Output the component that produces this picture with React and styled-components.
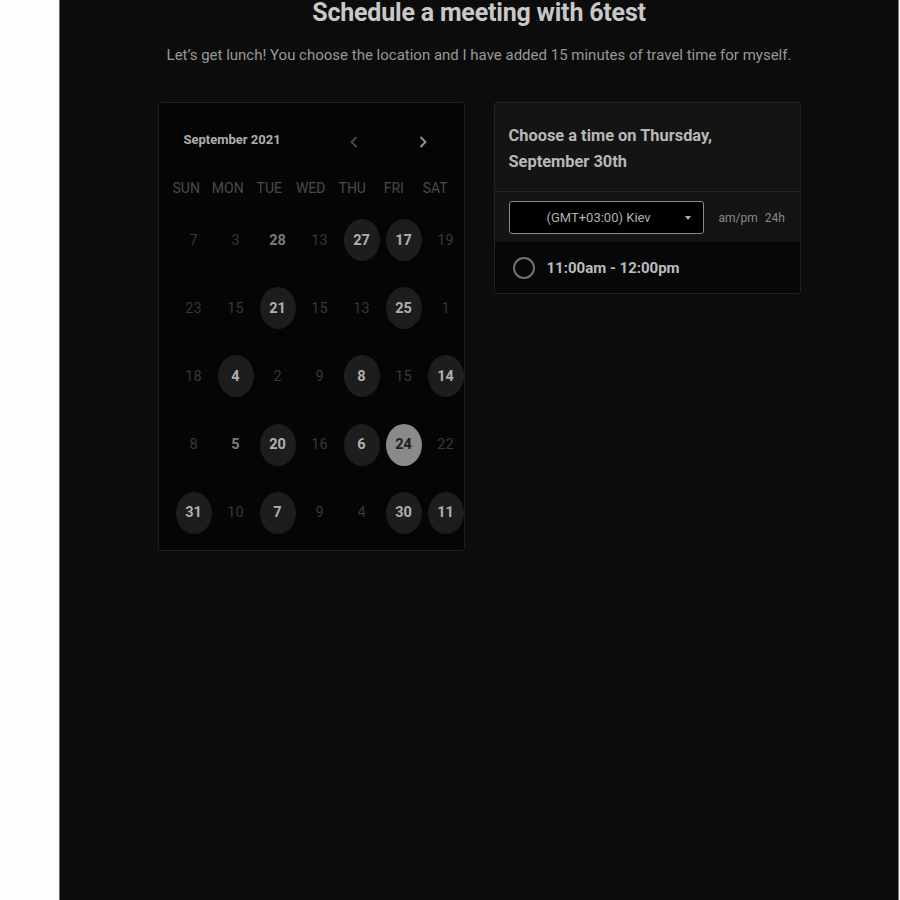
import React from "react";
import styled, { createGlobalStyle } from "styled-components";

const Global = createGlobalStyle`
  html, body {
    margin: 0;
    padding: 0;
    background: #fdfdfd;
    font-family: Roboto, "Liberation Sans", sans-serif;
  }
`;

const Page = styled.div`
  display: flex;
  width: 899px;
  height: 900px;
`;

const Gutter = styled.div`
  width: 59px;
  background: #fdfdfd;
`;

const Main = styled.div`
  width: 838px;
  background: #0c0c0c;
  border-left: 1px solid #6a6a6a;
  border-right: 1px solid #7a7a7a;
  display: flex;
  flex-direction: column;
  align-items: center;
`;

const Title = styled.h1`
  margin: 0;
  font-size: 25px;
  line-height: 25px;
  font-weight: 700;
  color: #c8c8c8;
  letter-spacing: -0.2px;
`;

const Subtitle = styled.p`
  margin: 20px 0 0;
  font-size: 15px;
  line-height: 20px;
  color: #989898;
`;

const Columns = styled.div`
  display: flex;
  align-items: flex-start;
  gap: 29px;
  margin-top: 37px;
`;

const CalendarCard = styled.div`
  width: 305px;
  height: 447px;
  background: #050505;
  border: 1px solid #1f1f1f;
  border-radius: 3px;
`;

const CalHeader = styled.div`
  display: flex;
  align-items: center;
  height: 72px;
  padding-left: 25px;
`;

const MonthLabel = styled.div`
  font-size: 13px;
  font-weight: 700;
  color: #adadad;
  width: 136px;
`;

const Arrow = styled.span`
  width: 69px;
  display: flex;
  justify-content: center;
  color: ${(p) => (p.$active ? "#9a9a9a" : "#4a4a4a")};
  margin-top: 6px;
`;

const WeekRow = styled.div`
  display: grid;
  grid-template-columns: repeat(7, 41.5px);
  margin-left: 7px;
  height: 24px;
  align-items: center;
  margin-top: 1px;
`;

const WeekDay = styled.div`
  text-align: center;
  font-size: 14px;
  color: #4a4a4a;
`;

const DayGrid = styled.div`
  display: grid;
  grid-template-columns: repeat(7, 42px);
  grid-auto-rows: 68.2px;
  margin-left: 14px;
  margin-top: 6px;
`;

const DayCell = styled.div`
  display: flex;
  align-items: center;
  justify-content: center;
`;

const Day = styled.div`
  width: 36px;
  height: 42px;
  border-radius: 50%;
  display: flex;
  align-items: center;
  justify-content: center;
  font-size: 14.5px;
  font-weight: ${(p) => (p.$kind === "off" ? 400 : 700)};
  color: ${(p) =>
    p.$kind === "sel"
      ? "#1e1e1e"
      : p.$kind === "on"
      ? "#b0b0b0"
      : p.$kind === "mid"
      ? "#7a7a7a"
      : "#383838"};
  background: ${(p) =>
    p.$kind === "sel" ? "#8a8a8a" : p.$kind === "on" ? "#1d1d1d" : "transparent"};
`;

const TimeCard = styled.div`
  width: 305px;
  background: #141414;
  border: 1px solid #222;
  border-radius: 3px;
  overflow: hidden;
`;

const TimeHeader = styled.div`
  padding: 20px 14px 16px;
  font-size: 16.4px;
  font-weight: 700;
  line-height: 26px;
  color: #b8b8b8;
  border-bottom: 1px solid #262626;
`;

const Controls = styled.div`
  display: flex;
  align-items: center;
  padding: 9px 14px 8px;
`;

const ZoneSelect = styled.div`
  width: 195px;
  height: 33px;
  box-sizing: border-box;
  border: 1px solid #8a8a8a;
  border-radius: 3px;
  background: #000;
  display: flex;
  align-items: center;
  font-size: 13px;
  color: #b0b0b0;
  padding-left: 37px;
`;

const ZoneText = styled.span`
  flex: 1;
`;

const Caret = styled.span`
  width: 0;
  height: 0;
  border-left: 3px solid transparent;
  border-right: 3px solid transparent;
  border-top: 4px solid #b0b0b0;
  margin-right: 12px;
`;

const Formats = styled.div`
  margin-left: 15px;
  font-size: 12px;
  color: #8a8a8a;
  display: flex;
  gap: 7px;
`;

const Slot = styled.div`
  display: flex;
  align-items: center;
  height: 51px;
  background: #070707;
  padding-left: 18px;
`;

const Radio = styled.span`
  width: 18px;
  height: 18px;
  border: 2px solid #727272;
  border-radius: 50%;
  margin-right: 12px;
`;

const SlotText = styled.span`
  font-size: 15px;
  font-weight: 700;
  color: #bcbcbc;
`;

const weekdays = ["SUN", "MON", "TUE", "WED", "THU", "FRI", "SAT"];

const days = [
  [["7", "off"], ["3", "off"], ["28", "mid"], ["13", "off"], ["27", "on"], ["17", "on"], ["19", "off"]],
  [["23", "off"], ["15", "off"], ["21", "on"], ["15", "off"], ["13", "off"], ["25", "on"], ["1", "off"]],
  [["18", "off"], ["4", "on"], ["2", "off"], ["9", "off"], ["8", "on"], ["15", "off"], ["14", "on"]],
  [["8", "off"], ["5", "mid"], ["20", "on"], ["16", "off"], ["6", "on"], ["24", "sel"], ["22", "off"]],
  [["31", "on"], ["10", "off"], ["7", "on"], ["9", "off"], ["4", "off"], ["30", "on"], ["11", "on"]],
];

const Chevron = ({ dir }) => (
  <svg width="8" height="12" viewBox="0 0 8 12" fill="none">
    <path
      d={dir === "left" ? "M6.5 1 L1.5 6 L6.5 11" : "M1.5 1 L6.5 6 L1.5 11"}
      stroke="currentColor"
      strokeWidth="1.8"
    />
  </svg>
);

export default function App() {
  return (
    <Page>
      <Global />
      <Gutter />
      <Main>
        <Title>Schedule a meeting with 6test</Title>
        <Subtitle>
          Let’s get lunch! You choose the location and I have added 15 minutes of travel time for myself.
        </Subtitle>
        <Columns>
          <CalendarCard>
            <CalHeader>
              <MonthLabel>September 2021</MonthLabel>
              <Arrow>
                <Chevron dir="left" />
              </Arrow>
              <Arrow $active>
                <Chevron dir="right" />
              </Arrow>
            </CalHeader>
            <WeekRow>
              {weekdays.map((w) => (
                <WeekDay key={w}>{w}</WeekDay>
              ))}
            </WeekRow>
            <DayGrid>
              {days.flat().map(([n, kind], i) => (
                <DayCell key={i}>
                  <Day $kind={kind}>{n}</Day>
                </DayCell>
              ))}
            </DayGrid>
          </CalendarCard>
          <TimeCard>
            <TimeHeader>
              Choose a time on Thursday,
              <br />
              September 30th
            </TimeHeader>
            <Controls>
              <ZoneSelect>
                <ZoneText>(GMT+03:00) Kiev</ZoneText>
                <Caret />
              </ZoneSelect>
              <Formats>
                <span>am/pm</span>
                <span>24h</span>
              </Formats>
            </Controls>
            <Slot>
              <Radio />
              <SlotText>11:00am - 12:00pm</SlotText>
            </Slot>
          </TimeCard>
        </Columns>
      </Main>
    </Page>
  );
}
